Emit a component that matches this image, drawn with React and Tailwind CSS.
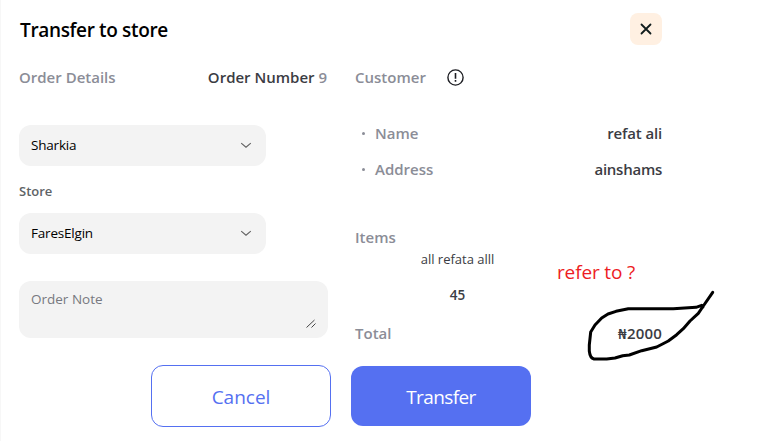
import React from "react";

function Chevron() {
  return (
    <svg width="12" height="8" viewBox="0 0 12 8" fill="none" stroke="#606060" strokeWidth="1.1">
      <path d="M1.2 1.2 6 5.2l4.8-4" />
    </svg>
  );
}

function SelectBox({ value, textClass }) {
  return (
    <button className="flex h-[41px] w-[247px] items-center justify-between rounded-xl bg-[#f3f3f3] pr-[14px] pl-3 text-[13.5px] font-normal text-black">
      <span className={textClass}>{value}</span>
      <Chevron />
    </button>
  );
}

function CustomerRow({ label, value, labelClass, valueClass }) {
  return (
    <div className="flex h-5 items-center justify-between">
      <div className="flex items-center text-[#8b8d97]">
        <span className="mr-[10px] ml-[7px] size-[3px] rounded-full bg-[#8b8d97]" />
        <span className={labelClass}>{label}</span>
      </div>
      <span className={valueClass}>{value}</span>
    </div>
  );
}

export default function App() {
  return (
    <main className="relative h-[441px] w-[768px] overflow-hidden border-l border-[#f7f7f7] bg-white pl-[18px] font-['Open_Sans','Noto_Sans',sans-serif] text-[15px] leading-5 font-semibold whitespace-nowrap text-[#3b3c43]">
      <header className="flex h-[58px] w-[643px] items-start justify-between pt-[13px]">
        <h1 className="pt-[7px] pl-px text-[19px] leading-5 font-semibold tracking-[-0.35px] text-black">Transfer to store</h1>
        <button className="flex size-8 items-center justify-center rounded-lg bg-[#fff0e2]">
          <svg width="12" height="12" viewBox="0 0 12 12" stroke="#101c1d" strokeWidth="1.8" strokeLinecap="round">
            <path d="m1.5 1.5 9 9m0-9-9 9" />
          </svg>
        </button>
      </header>

      <div className="flex gap-[27px]">
        <section className="w-[309px] pt-[9px]">
          <div className="flex justify-between pr-px">
            <span className="text-[#8b8d97]">Order Details</span>
            <span>Order Number <span className="text-[#8b8d97]">9</span></span>
          </div>
          <div className="mt-[38px]"><SelectBox value="Sharkia" textClass="-mt-0.5 tracking-[-0.2px]" /></div>
          <div className="mt-[15px] mb-3 text-[13px] text-[#5e6366]">Store</div>
          <SelectBox value="FaresElgin" textClass="-mt-0.5 tracking-[-0.2px]" />
          <div className="mt-[27px] flex h-[57px] w-[309px] justify-between rounded-xl bg-[#f3f3f3] pt-2 pr-3 pb-[9px] pl-3">
            <span className="text-[13.5px] font-normal text-[#777980]">Order Note</span>
            <svg className="self-end" width="10" height="10" viewBox="0 0 10 10" stroke="#444" strokeWidth="1">
              <path d="m.5 8.5 8-7.5m-3 7.5 4-4" />
            </svg>
          </div>
        </section>

        <section className="w-[307px] pt-[9px]">
          <div className="flex items-center text-[#8b8d97]">
            <span className="w-[92px]">Customer</span>
            <svg width="17" height="17" viewBox="0 0 17 17" fill="none" stroke="#1c1d22" strokeWidth="1.4">
              <circle cx="8.5" cy="8.5" r="7.6" />
              <path d="M8.5 4v5.7m0 1.4v1.6" strokeWidth="1.6" />
            </svg>
          </div>
          <div className="mt-9 flex flex-col gap-4">
            <CustomerRow label="Name" value="refat ali" labelClass="" valueClass="tracking-[-0.15px]" />
            <CustomerRow label="Address" value="ainshams" labelClass="" valueClass="tracking-[-0.25px]" />
          </div>
          <div className="mt-12 text-[#8b8d97]">Items</div>
          <div className="w-[205px] pt-[2px] text-center">
            <div className="text-[13px] font-normal">all refata alll</div>
            <div className="mt-4 text-[13.5px]">45</div>
          </div>
          <div className="mt-[18px] flex justify-between">
            <span className="text-[#8b8d97]">Total</span>
            <span className="tracking-[0.2px]">₦2000</span>
          </div>
        </section>
      </div>

      <footer className="mt-[22px] ml-[132px] flex gap-5 text-[19px] font-normal">
        <button className="h-[62px] w-[180px] rounded-xl border border-[#5570f1] pt-0.5 text-[#5570f1]">Cancel</button>
        <button className="mt-px h-[60px] w-[180px] rounded-xl bg-[#5570f1] pt-0.5 tracking-[-0.6px] text-white">Transfer</button>
      </footer>

      <p className="absolute top-[262px] left-[556px] text-[19px] font-normal tracking-[-0.15px] text-[#ed1c24]">refer to ?</p>
      <svg className="absolute top-0 -left-px" width="768" height="441" viewBox="0 0 768 441" fill="none" stroke="#000" strokeWidth="3" strokeLinecap="round" strokeLinejoin="round">
        <path d="M712.7 292.3 703.3 306 698.3 313.3 690 321 683.3 328.7 676.7 334.7 668.3 341 656.7 347 641.7 350.7 629.3 355 622.7 355.7 615 358 606.7 359H594Q590 358 589.3 351V345L590.7 332 595 325 601.7 318 608 314 616 311.3 628.3 308.7H673.3L696 307.3 701.7 305.3 703 307" />
      </svg>
    </main>
  );
}
